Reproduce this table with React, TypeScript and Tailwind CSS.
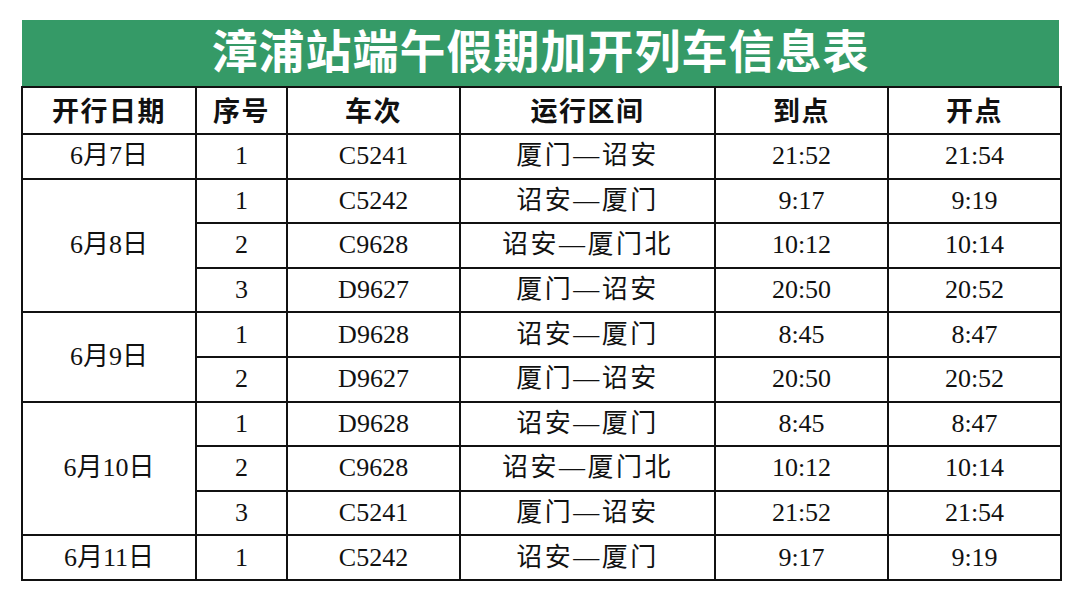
import React from "react";

type Row = { date?: string; span?: number; no: string; train: string; route: string; arr: string; dep: string };

const rows: Row[] = [
  { date: "6月7日", span: 1, no: "1", train: "C5241", route: "厦门—诏安", arr: "21:52", dep: "21:54" },
  { date: "6月8日", span: 3, no: "1", train: "C5242", route: "诏安—厦门", arr: "9:17", dep: "9:19" },
  { no: "2", train: "C9628", route: "诏安—厦门北", arr: "10:12", dep: "10:14" },
  { no: "3", train: "D9627", route: "厦门—诏安", arr: "20:50", dep: "20:52" },
  { date: "6月9日", span: 2, no: "1", train: "D9628", route: "诏安—厦门", arr: "8:45", dep: "8:47" },
  { no: "2", train: "D9627", route: "厦门—诏安", arr: "20:50", dep: "20:52" },
  { date: "6月10日", span: 3, no: "1", train: "D9628", route: "诏安—厦门", arr: "8:45", dep: "8:47" },
  { no: "2", train: "C9628", route: "诏安—厦门北", arr: "10:12", dep: "10:14" },
  { no: "3", train: "C5241", route: "厦门—诏安", arr: "21:52", dep: "21:54" },
  { date: "6月11日", span: 1, no: "1", train: "C5242", route: "诏安—厦门", arr: "9:17", dep: "9:19" },
];

const headers = ["开行日期", "序号", "车次", "运行区间", "到点", "开点"];
const widths = ["w-[174px]", "w-[91px]", "w-[173px]", "w-[255px]", "w-[173px]", "w-[173px]"];

const cell = "border-[2.5px] border-[#111] text-center align-middle p-0";

export default function App() {
  return (
    <div className="w-[1080px] h-[600px] bg-white pt-[20px] pl-[21px]">
      <div className="w-[1038px]">
        <div
          className="h-[66px] bg-[#359a67] flex items-center justify-center text-white text-[46px] font-bold leading-none ml-[1px] tracking-[1px]"
          style={{ fontFamily: '"Liberation Serif", "Noto Sans CJK SC", serif' }}
        >
          漳浦站端午假期加开列车信息表
        </div>
        <table
          className="w-[1038px] border-collapse table-fixed text-[#111]"
          style={{ fontFamily: '"Liberation Serif", "Noto Sans CJK SC", serif' }}
        >
          <colgroup>
            {widths.map((w, i) => (
              <col key={i} className={w} />
            ))}
          </colgroup>
          <thead>
            <tr className="h-[47px]">
              {headers.map((h) => (
                <th
                  key={h}
                  className={`${cell} text-[27px] font-bold tracking-[1.5px]`}
                  style={{ fontFamily: '"Noto Sans CJK SC", sans-serif' }}
                >
                  {h}
                </th>
              ))}
            </tr>
          </thead>
          <tbody className="text-[26px] leading-none">
            {rows.map((r, i) => (
              <tr key={i} className="h-[44.6px]">
                {r.date && (
                  <td rowSpan={r.span} className={cell}>
                    {r.date}
                  </td>
                )}
                <td className={cell}>{r.no}</td>
                <td className={cell}>{r.train}</td>
                <td className={`${cell} tracking-[2.5px]`}>{r.route}</td>
                <td className={cell}>{r.arr}</td>
                <td className={cell}>{r.dep}</td>
              </tr>
            ))}
          </tbody>
        </table>
      </div>
    </div>
  );
}
